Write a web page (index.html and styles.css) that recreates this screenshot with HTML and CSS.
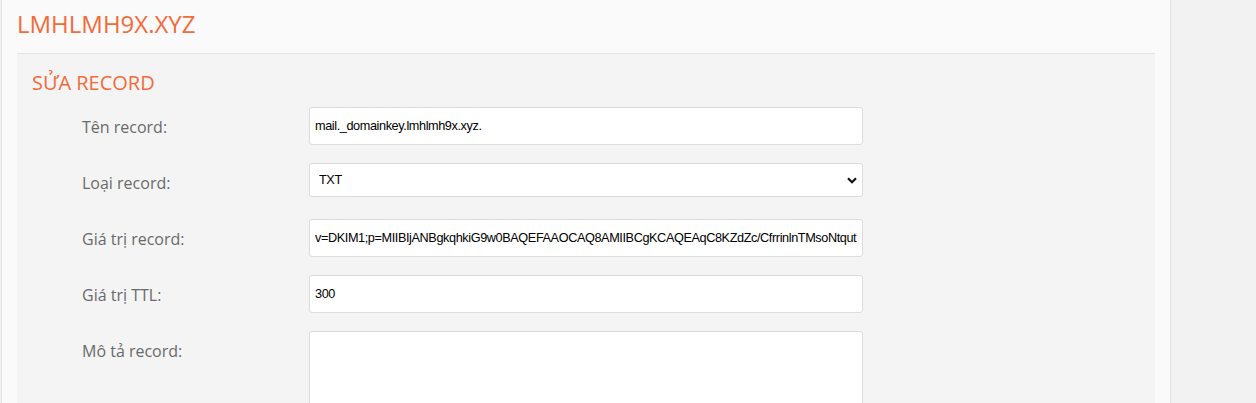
FILE: index.html
```html
<!DOCTYPE html>
<html lang="vi">
<head>
<meta charset="utf-8">
<title>Sửa record</title>
<link rel="stylesheet" href="styles.css">
</head>
<body>
<div class="panel">
  <div class="panel-head">
    <h2 class="domain">LMHLMH9X.XYZ</h2>
  </div>
  <div class="box">
    <h3 class="box-title">SỬA RECORD</h3>
    <form class="form">
      <label class="label" for="name">Tên record:</label>
      <input class="field" id="name" type="text" value="mail._domainkey.lmhlmh9x.xyz.">

      <label class="label" for="type">Loại record:</label>
      <div class="select-wrap">
        <select class="field select" id="type">
          <option>TXT</option>
        </select>
        <svg class="chevron" width="10" height="7" viewBox="0 0 10 7"><path d="M1 1.2 L5 5.2 L9 1.2" fill="none" stroke="#111" stroke-width="2.2"/></svg>
      </div>

      <label class="label" for="value">Giá trị record:</label>
      <input class="field" id="value" type="text" value="v=DKIM1;p=MIIBIjANBgkqhkiG9w0BAQEFAAOCAQ8AMIIBCgKCAQEAqC8KZdZc/CfrrinlnTMsoNtqutXw3Pq8vYb2LkQeR7nD">

      <label class="label" for="ttl">Giá trị TTL:</label>
      <input class="field" id="ttl" type="text" value="300">

      <label class="label" for="desc">Mô tả record:</label>
      <textarea class="field area" id="desc"></textarea>
    </form>
  </div>
</div>
</body>
</html>
```

FILE: styles.css
```css
html, body {
  margin: 0;
  padding: 0;
  height: 100%;
  overflow: hidden;
}
body {
  background: #f2f2f2;
  font-family: "Open Sans", "Noto Sans", sans-serif;
}
.panel {
  box-sizing: border-box;
  margin-left: 1px;
  width: 1170px;
  min-height: 100%;
  background: #fafafa;
  border-left: 1px solid #e2e2e2;
  border-right: 1px solid #e2e2e2;
  padding: 0 15px;
}
.panel-head {
  padding: 6px 0 11px;
  border-bottom: 1px solid #e3e3e3;
}
.domain {
  margin: 0;
  font-size: 24px;
  line-height: 36px;
  font-weight: 400;
  color: #f26b3b;
}
.box {
  background: #f4f4f4;
  padding: 15px 15px 0;
  min-height: 400px;
}
.box-title {
  margin: 0 0 11px;
  font-size: 20px;
  line-height: 27px;
  font-weight: 400;
  color: #f26b3b;
}
.form {
  display: grid;
  grid-template-columns: 227px 554px;
  grid-auto-rows: 38px;
  row-gap: 18px;
  padding-left: 50px;
  align-items: start;
}
.label {
  font-size: 16px;
  line-height: 22px;
  padding-top: 9px;
  color: #6a6a6a;
}
.field {
  box-sizing: border-box;
  width: 554px;
  height: 38px;
  margin: 0;
  border: 1px solid #dcdcdc;
  border-radius: 3px;
  background: #fff;
  padding: 0 5px;
  font-family: "Liberation Sans", Arial, sans-serif;
  font-size: 12.7px;
  letter-spacing: -0.4px;
  color: #000;
  outline: none;
}
.select-wrap {
  position: relative;
  width: 554px;
  height: 34px;
}
.select {
  height: 34px;
  padding-left: 9px;
  -webkit-appearance: none;
  appearance: none;
}
.chevron {
  position: absolute;
  right: 6px;
  top: 14px;
  pointer-events: none;
}
.area {
  height: 110px;
  resize: none;
  padding: 6px 5px;
}
```
